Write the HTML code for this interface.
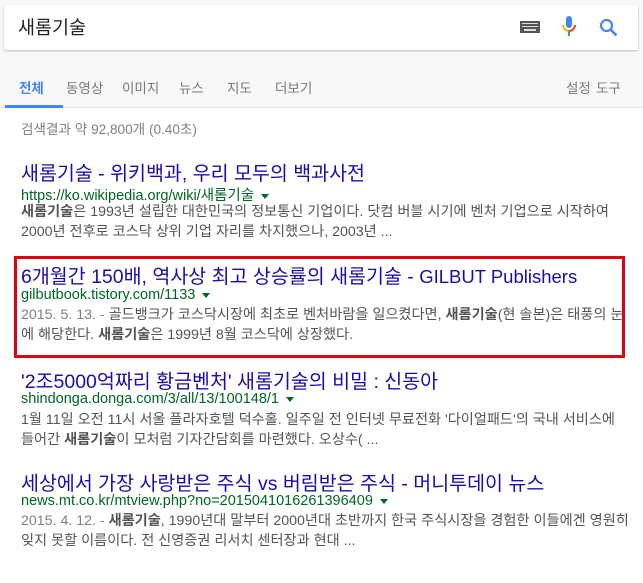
<!DOCTYPE html>
<html><head><meta charset="utf-8"><style>
*{margin:0;padding:0;box-sizing:border-box}
body{width:643px;height:583px;background:#fff;font-family:Arial,"Liberation Sans","Noto Sans CJK KR",sans-serif;position:relative;overflow:hidden}
.top{position:absolute;left:0;top:0;width:643px;height:108px;background:#f8f8f8;border-bottom:1px solid #e6e6e6}
.box{position:absolute;left:4px;top:5px;width:634px;height:45px;background:#fff;box-shadow:0 1px 2px rgba(0,0,0,.25);border-radius:2px}
.q{position:absolute;left:18px;top:14px;font-size:18.5px;color:#222}
.tab{position:absolute;top:77px;font-size:13.5px;color:#777}
.ul{position:absolute;left:5px;top:105px;width:58px;height:3px;background:#4285f4}
.t{position:absolute;left:21px;font-size:19.5px;color:#1a0dab;white-space:nowrap}
.t .l{font-size:18.5px}
.u{position:absolute;left:21px;font-size:14.5px;color:#006621;white-space:nowrap}
.u:after{content:"";display:inline-block;margin-left:7px;border-left:4px solid transparent;border-right:4px solid transparent;border-top:5px solid #006621;vertical-align:middle}
.s{position:absolute;left:21px;font-size:14.2px;color:#545454;line-height:20px;white-space:nowrap}
.s b{color:#545454}
.d{color:#808080}
</style></head><body>
<div class="top"></div>
<div class="box"></div>
<div class="q">새롬기술</div>
<svg style="position:absolute;left:520px;top:21px" width="20" height="12"><rect width="20" height="12" fill="#555"/><g fill="#ddd"><rect x="2" y="2" width="16" height="1"/><rect x="2" y="5" width="16" height="1"/><rect x="4" y="8" width="12" height="2"/></g></svg>
<svg style="position:absolute;left:560px;top:15px" width="18" height="24" viewBox="0 0 18 24"><rect x="6" y="1" width="6" height="12" rx="3" fill="#4285f4"/><path d="M3 10a6 6 0 0 0 6 6" stroke="#fbbc05" stroke-width="2" fill="none"/><path d="M15 10a6 6 0 0 1-6 6" stroke="#ea4335" stroke-width="2" fill="none"/><rect x="8" y="16" width="2" height="5" fill="#34a853"/></svg>
<svg style="position:absolute;left:599px;top:18px" width="20" height="20" viewBox="0 0 20 20"><circle cx="7.5" cy="7.5" r="5.5" stroke="#4285f4" stroke-width="2.2" fill="none"/><path d="M11.5 11.5l6 6" stroke="#4285f4" stroke-width="2.6"/></svg>
<div class="tab" style="left:19px;color:#4285f4;font-weight:bold">전체</div>
<div class="tab" style="left:66px">동영상</div>
<div class="tab" style="left:122px">이미지</div>
<div class="tab" style="left:179px">뉴스</div>
<div class="tab" style="left:227px">지도</div>
<div class="tab" style="left:275px">더보기</div>
<div class="tab" style="left:566px">설정</div>
<div class="tab" style="left:596px">도구</div>
<div class="ul"></div>
<div class="s" style="left:21px;top:120px;color:#808080;font-size:13.6px">검색결과 약 92,800개 (0.40초)</div>

<div class="t" style="top:157px">새롬기술 - 위키백과, 우리 모두의 백과사전</div>
<div class="u" style="top:184px">https://ko.wikipedia.org/wiki/새롬기술</div>
<div class="s" style="top:202px"><b>새롬기술</b>은 1993년 설립한 대한민국의 정보통신 기업이다. 닷컴 버블 시기에 벤처 기업으로 시작하여<br>2000년 전후로 코스닥 상위 기업 자리를 차지했으나, 2003년 ...</div>

<div style="position:absolute;left:14px;top:256px;width:611px;height:102px;border:3px solid #e0000f"></div>
<div class="t" style="top:260px">6개월간 150배, 역사상 최고 상승률의 새롬기술 - <span class="l">GILBUT Publishers</span></div>
<div class="u" style="top:287px">gilbutbook.tistory.com/1133</div>
<div class="s" style="top:305px"><span class="d">2015. 5. 13. - </span>골드뱅크가 코스닥시장에 최초로 벤처바람을 일으켰다면, <b>새롬기술</b>(현 솔본)은 태풍의 눈<br>에 해당한다. <b>새롬기술</b>은 1999년 8월 코스닥에 상장했다.</div>

<div class="t" style="top:365px">'2조5000억짜리 황금벤처' 새롬기술의 비밀 : 신동아</div>
<div class="u" style="top:391px">shindonga.donga.com/3/all/13/100148/1</div>
<div class="s" style="top:410px">1월 11일 오전 11시 서울 플라자호텔 덕수홀. 일주일 전 인터넷 무료전화 '다이얼패드'의 국내 서비스에<br>들어간 <b>새롬기술</b>이 모처럼 기자간담회를 마련했다. 오상수( ...</div>

<div class="t" style="top:467px">세상에서 가장 사랑받은 주식 vs 버림받은 주식 - 머니투데이 뉴스</div>
<div class="u" style="top:493px">news.mt.co.kr/mtview.php?no=2015041016261396409</div>
<div class="s" style="top:511px"><span class="d">2015. 4. 12. - </span><b>새롬기술</b>, 1990년대 말부터 2000년대 초반까지 한국 주식시장을 경험한 이들에겐 영원히<br>잊지 못할 이름이다. 전 신영증권 리서치 센터장과 현대 ...</div>
</body></html>
